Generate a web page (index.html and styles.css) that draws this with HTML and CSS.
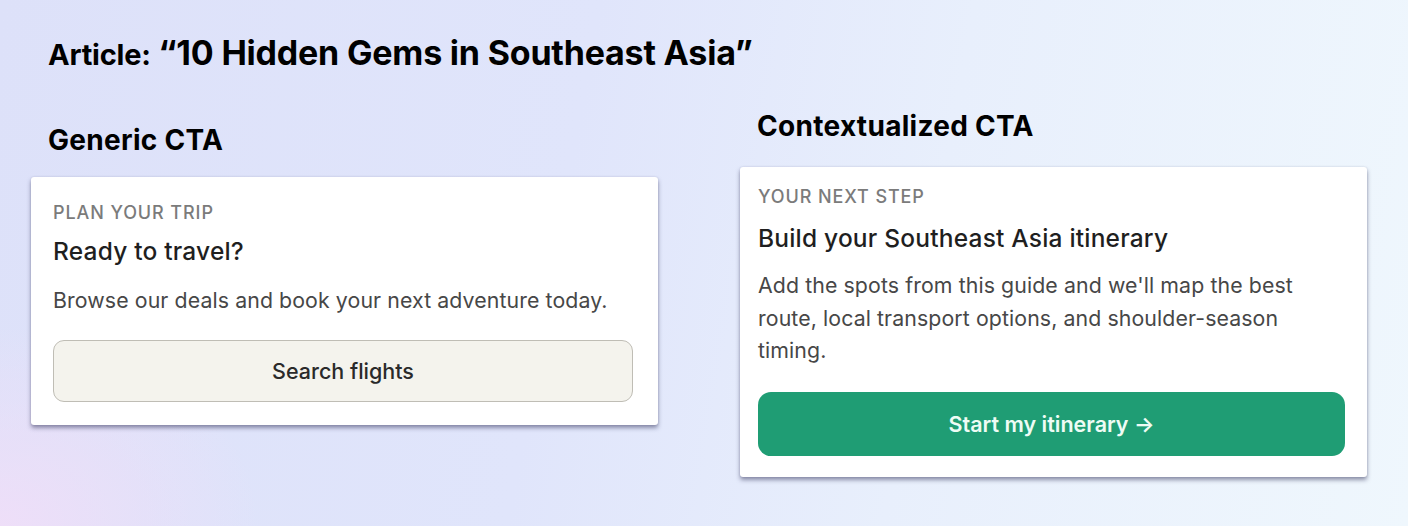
FILE: index.html
```html
<!DOCTYPE html>
<html lang="en">
<head>
<meta charset="utf-8">
<title>CTA comparison</title>
<link rel="stylesheet" href="styles.css">
</head>
<body>
<main class="page">
  <h1 class="title"><span class="title-lead">Article:</span> <span class="title-main">“10 Hidden Gems in Southeast Asia”</span></h1>
  <div class="columns">
    <section class="col col-generic">
      <h2 class="col-heading">Generic CTA</h2>
      <div class="card card-generic">
        <div class="eyebrow">PLAN YOUR TRIP</div>
        <div class="card-title">Ready to travel?</div>
        <p class="card-body">Browse our deals and book your next adventure today.</p>
        <button class="btn btn-plain">Search flights</button>
      </div>
    </section>
    <section class="col col-context">
      <h2 class="col-heading">Contextualized CTA</h2>
      <div class="card card-context">
        <div class="eyebrow">YOUR NEXT STEP</div>
        <div class="card-title">Build your Southeast Asia itinerary</div>
        <p class="card-body card-body-long">Add the spots from this guide and we'll map the best route, local transport options, and shoulder-season timing.</p>
        <button class="btn btn-primary">Start my itinerary →</button>
      </div>
    </section>
  </div>
</main>
</body>
</html>
```

FILE: styles.css
```css
* { box-sizing: border-box; }
html, body { margin: 0; padding: 0; }
body {
  width: 1408px;
  height: 526px;
  overflow: hidden;
  font-family: Inter, "Liberation Sans", sans-serif;
  background:
    radial-gradient(ellipse 260px 200px at 0% 100%, rgba(240, 222, 248, 0.9), rgba(240, 222, 248, 0) 100%),
    linear-gradient(100deg, #dde1f9 0%, #e0e5fb 40%, #e8effc 65%, #eff7fd 100%);
}
.page {
  padding: 33px 41px 0 31px;
}
.title {
  margin: 0 0 0 17px;
  font-weight: 700;
  line-height: 40px;
  color: #000;
  letter-spacing: -0.2px;
}
.title-lead { font-size: 29px; }
.title-main { font-size: 34px; }
.columns {
  display: flex;
  gap: 82px;
  align-items: flex-start;
}
.col {
  width: 627px;
  display: flex;
  flex-direction: column;
}
.col-heading {
  margin: 0 0 0 17px;
  font-size: 28px;
  font-weight: 700;
  line-height: 32px;
  letter-spacing: 0.3px;
  color: #000;
}
.col-generic { margin-top: 49px; }
.col-generic .col-heading { margin-bottom: 21px; }
.col-context { margin-top: 35px; }
.col-context .col-heading { margin-bottom: 25px; }

.card {
  background: #fff;
  border-radius: 3px;
  box-shadow: 0 3px 4px rgba(50, 50, 90, 0.5), 0 0 2px rgba(50, 50, 90, 0.15);
  display: flex;
  flex-direction: column;
  align-items: flex-start;
}
.card-generic { padding: 26px 25px 23px 22px; }
.card-context { padding: 20px 22px 21px 18px; }

.eyebrow {
  font-size: 18px;
  line-height: 20px;
  font-weight: 500;
  color: #7b7b7b;
  letter-spacing: 0.9px;
}
.card-title {
  font-size: 24.5px;
  line-height: 28px;
  font-weight: 500;
  color: #1f1f1f;
  letter-spacing: 0.2px;
}
.card-generic .card-title { margin-top: 14px; }
.card-context .card-title { margin-top: 17px; }
.card-body {
  margin: 21px 0 0;
  font-size: 21.3px;
  line-height: 28px;
  color: #474747;
  letter-spacing: 0.1px;
}
.card-body-long {
  margin-top: 17px;
  line-height: 32.5px;
  max-width: 570px;
}
.btn {
  width: 100%;
  font-family: inherit;
  font-size: 21.5px;
  cursor: pointer;
}
.btn-plain {
  margin-top: 26px;
  height: 62px;
  background: #f4f3ed;
  border: 1px solid #bfbdb5;
  border-radius: 11px;
  font-weight: 500;
  color: #2a2a2a;
}
.btn-primary {
  margin-top: 25px;
  height: 64px;
  background: #1f9d74;
  border: none;
  border-radius: 13px;
  font-weight: 600;
  color: #eefcf5;
}
```
